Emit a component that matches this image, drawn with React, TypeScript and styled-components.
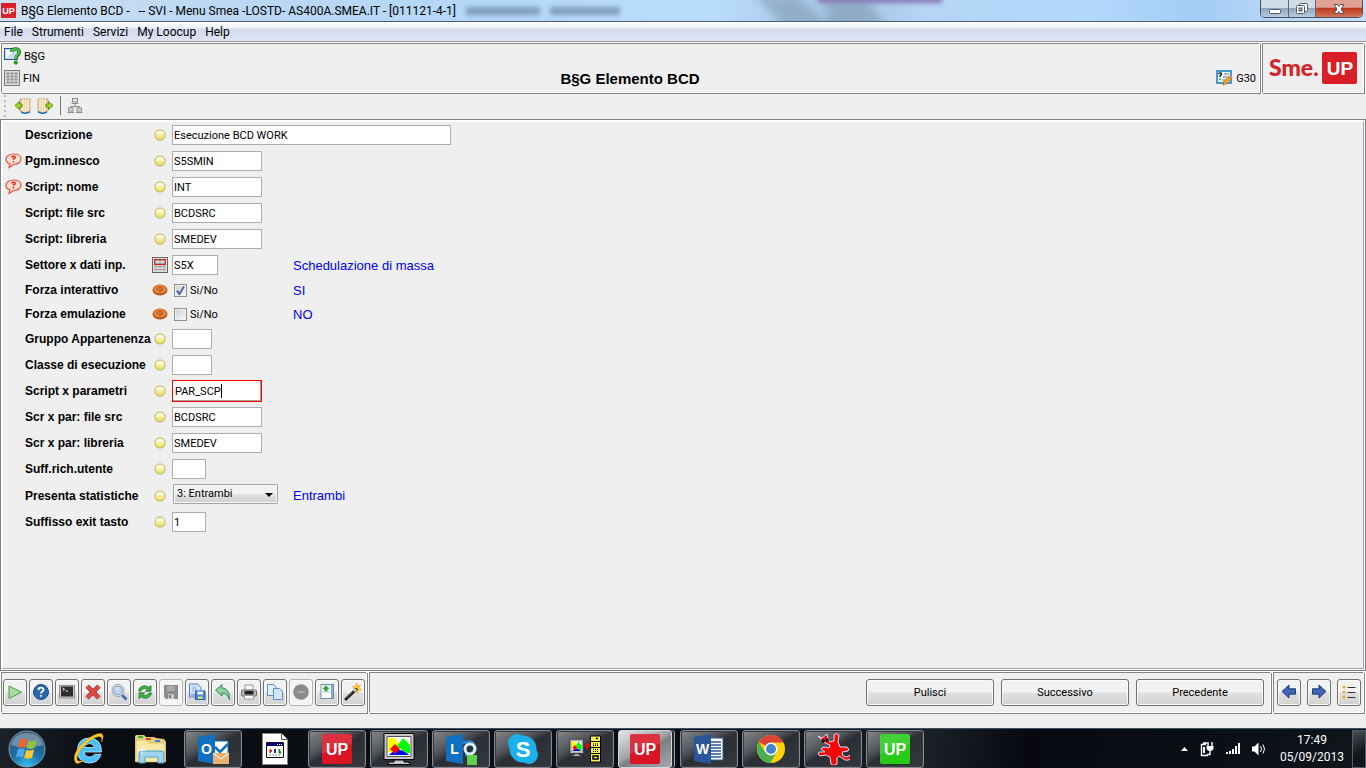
import React from "react";
import styled, { createGlobalStyle, css } from "styled-components";

const ui = `Roboto, "Open Sans", sans-serif`;
const arial = `"Liberation Sans", Arial, sans-serif`;
const face = "#efefef";
const line = "#848484";

const GlobalStyle = createGlobalStyle`
  * { box-sizing: border-box; }
  body { margin: 0; background: ${face}; font-family: ${ui}; font-size: 11px; color: #000; }
  button, input, select { font: inherit; color: inherit; margin: 0; }
`;

/* ---------- layout ---------- */

const Page = styled.div`
  display: flex;
  flex-direction: column;
  min-height: 100vh;
`;

const TitleBar = styled.header`
  position: relative;
  display: flex;
  align-items: flex-start;
  height: 22px;
  padding-left: 1px;
  overflow: hidden;
  border-bottom: 1px solid #4f5d6c;
  background: linear-gradient(90deg, #cfe0f2 0%, #bcd8f3 15%, #b4d7f8 35%, #badcfd 52%, #a3c3e0 62%, #b5d6f6 68%, #b2d8fb 80%, #a4cdf4 88%, #b8d8f5 94%, #c9def2 100%);
`;

const GlassShade = styled.svg`
  position: absolute;
  left: 0;
  top: 0;
  width: 100%;
  height: 21px;
`;

const WindowTitle = styled.h1`
  position: relative;
  flex: 1;
  margin: 0 0 0 5px;
  font-size: 12px;
  line-height: 22px;
  font-weight: 400;
  white-space: pre;
`;

const AppMark = styled.svg`
  position: relative;
  width: 15px;
  height: 15px;
  margin-top: 3px;
  flex: none;
`;

const WindowButtons = styled.div`
  position: relative;
  display: flex;
  height: 18px;
  margin-right: 3px;
  border: 1px solid #46525f;
  border-top: 0;
  border-radius: 0 0 5px 5px;
  overflow: hidden;
`;

const WindowButton = styled.button<{ $close?: boolean }>`
  width: ${(p) => (p.$close ? 47 : 27)}px;
  padding: 0;
  border: 0;
  border-left: 1px solid #5b6a7a;
  background: linear-gradient(#cfdbe7 0 45%, #93a7bc 50%, #b7cbde);
  &:first-child { border-left: 0; }
  ${(p) => p.$close && css`background: linear-gradient(#dfa293 0 42%, #bf3a1d 50%, #d4745a);`}
  svg { display: block; margin: 0 auto; }
`;

const MenuBar = styled.nav`
  display: flex;
  gap: 9px;
  height: 20px;
  padding-left: 4px;
  border-bottom: 1px solid #979797;
  background: linear-gradient(#fff 0, #eef1f8 6px, #d5dbed 7px, #dfe4f4 19px);
  font-size: 12px;
  line-height: 20px;
`;

const MenuItem = styled.a`
  color: #000;
  text-decoration: none;
`;

const Bar = styled.div`
  display: flex;
  gap: 2px;
  padding: 1px 2px 1px 1px;
  background: #fff;
`;

const Etched = styled.div<{ $grow?: boolean }>`
  flex: ${(p) => (p.$grow ? "1" : "none")};
  border: 1px solid;
  border-color: ${line} #fff #fff ${line};
  background: ${face};
  box-shadow: 1px 1px 0 ${line};
`;

const HeaderPanel = styled(Etched)`
  display: grid;
  grid-template-columns: 1fr auto 1fr;
  grid-auto-rows: 22px;
  align-items: center;
  padding: 1px 3px 3px 2px;
`;

const IconLabel = styled.div<{ $end?: boolean }>`
  display: flex;
  align-items: center;
  gap: 3px;
  grid-column: ${(p) => (p.$end ? 3 : 1)};
  justify-content: ${(p) => (p.$end ? "flex-end" : "flex-start")};
`;

const PageTitle = styled.h2`
  grid-column: 2;
  margin: 0;
  font: bold 15px ${arial};
`;

const LogoPanel = styled(Etched)`
  display: flex;
  align-items: center;
  justify-content: center;
  width: 102px;
`;

const ToolStrip = styled.div`
  display: flex;
  align-items: center;
  height: 25px;
  padding: 0 0 2px 4px;
`;

const Grip = styled.span`
  width: 2px;
  height: 22px;
  margin-right: 8px;
  background: repeating-linear-gradient(#b9b9b9 0 2px, transparent 2px 5px);
`;

const StripButton = styled.button`
  display: flex;
  width: 23px;
  padding: 0;
  border: 0;
  background: none;
`;

const Divider = styled.span`
  width: 1px;
  height: 19px;
  margin-right: 6px;
  background: #777;
`;

const Workspace = styled.main`
  flex: 1;
  display: flex;
  border: 1px solid #7f7f8c;
  padding: 1px;
  background: #fff;
`;

const FormPanel = styled.form`
  flex: 1;
  padding-left: 2px;
  border: 1px solid;
  border-color: #fff #a6a6a6 #a6a6a6 #fff;
  background: ${face};
`;

const Row = styled.div<{ $h?: number }>`
  display: grid;
  grid-template-columns: 20px 127px 20px 121px 1fr;
  align-items: center;
  height: ${(p) => p.$h ?? 26}px;
  svg { display: block; }
`;

const FieldLabel = styled.label`
  grid-column: 2;
  font: bold 12px ${arial};
  white-space: nowrap;
`;

const MarkerCell = styled.span`
  grid-column: 3;
  display: flex;
  justify-content: center;
  width: 16px;
`;

const FieldCell = styled.div`
  position: relative;
  grid-column: 4;
  display: flex;
  align-items: center;
`;

const TextField = styled.input<{ $w: number; $active?: boolean }>`
  flex: none;
  width: ${(p) => p.$w}px;
  height: 20px;
  padding: 0 1px;
  border: 1px solid #abadb3;
  border-radius: 0;
  outline: 0;
  background: #fff;
  ${(p) => p.$active && css`
    height: 22px;
    padding: 0 2px;
    border-color: #f00;
    box-shadow: inset -1px -1px 0 #a0a0a0;
  `}
`;

const Caret = styled.span`
  position: absolute;
  left: 49px;
  width: 1px;
  height: 14px;
  background: #000;
`;

const CheckLabel = styled.label`
  display: flex;
  align-items: center;
  gap: 3px;
  padding-left: 2px;
`;

const CheckBox = styled.input`
  appearance: none;
  width: 13px;
  height: 13px;
  border: 1px solid #8e8f8f;
  background: linear-gradient(135deg, #cfd3d8, #f6f6f6) content-box #f4f4f4;
  padding: 1px;
  &:checked {
    background: url("data:image/svg+xml,%3Csvg xmlns='http://www.w3.org/2000/svg' viewBox='0 0 11 11'%3E%3Cpath d='M2.5 5.5 4.6 8.500 8.500 2' fill='none' stroke='%234a5fa1' stroke-width='1.6'/%3E%3C/svg%3E") border-box, linear-gradient(135deg, #cfd3d8, #f6f6f6) content-box #f4f4f4;
  }
`;

const SelectBox = styled.div`
  position: relative;
  width: 105px;
  height: 20px;
  margin: 0 0 4px 1px;
  svg { position: absolute; right: 5px; top: 9px; pointer-events: none; }
`;

const Select = styled.select`
  appearance: none;
  width: 100%;
  height: 20px;
  padding: 0 3px;
  border: 1px solid #a2a4a8;
  border-radius: 1px;
  box-shadow: inset 0 0 0 1px #f8f8f8;
  background: linear-gradient(#f2f2f2 0 48%, #e2e2e2 52%, #cfcfcf);
`;

const Decoded = styled.output`
  grid-column: 5;
  font: 13px ${arial};
  color: #0000f0;
`;

const ButtonPanel = styled(Etched)<{ $gap: number; $end?: boolean }>`
  display: flex;
  align-items: center;
  justify-content: ${(p) => (p.$end ? "flex-end" : "flex-start")};
  gap: ${(p) => p.$gap}px;
  height: 41px;
  padding: 0 ${(p) => (p.$end ? 6 : 1)}px 1px;
`;

const NavPanel = styled(ButtonPanel)`
  padding: 0 2px 1px 3px;
`;

const PushButton = styled.button<{ $wide?: boolean }>`
  display: flex;
  align-items: center;
  justify-content: center;
  flex: none;
  width: ${(p) => (p.$wide ? 128 : 24)}px;
  height: 27px;
  padding: 0;
  border: 1px solid #707070;
  border-radius: 3px;
  box-shadow: inset 0 0 0 1px #fafafa;
  background: linear-gradient(#f2f2f2 0 48%, #e0e0e0 52%, #d2d2d2);
  &:disabled {
    border-color: #b0b5b8;
    background: #f4f4f4;
  }
`;

const StatusStrip = styled.div`
  height: 14px;
`;

const TaskBar = styled.footer`
  display: flex;
  align-items: center;
  gap: 4px;
  height: 40px;
  border-top: 1px solid #3c5063;
  background: linear-gradient(100deg, #1b2229 0%, #090c11 8%, #0c1016 30%, #0a0d13 50%, #1a2027 68%, #07090f 75%, #0a0f18 90%, #10161c 100%);
  color: #fff;
`;

const TaskButton = styled.button<{ $look?: "open" | "active"; $start?: boolean }>`
  display: flex;
  align-items: center;
  justify-content: center;
  flex: none;
  width: ${(p) => (p.$start ? 56 : 58)}px;
  height: 38px;
  padding: ${(p) => (p.$start ? "0 2px 0 0" : "0")};
  border: 0;
  background: none;
  ${(p) => p.$look && css`
    border: 1px solid #85898d;
    border-radius: 3px;
    box-shadow: inset 0 0 0 1px #3a3e42;
    background: linear-gradient(150deg, #85888a 0%, #53575b 35%, #2b2f33 50%, #35393d 100%);
  `}
  ${(p) => p.$look === "active" && css`
    border-color: #d5d8da;
    box-shadow: 2px 0 0 #23282d, 3px 0 0 #9fa5aa;
    width: 54px;
    margin-right: 4px;
    background: linear-gradient(150deg, #e4e6e7 0%, #a3a6a9 45%, #7c8083 55%, #a6a9ab 100%);
  `}
`;

const Tray = styled.div`
  display: flex;
  align-items: center;
  gap: 12px;
  margin-left: auto;
  height: 100%;
`;

const Clock = styled.time`
  width: 68px;
  font-size: 12px;
  line-height: 17px;
  text-align: center;
`;

const ShowDesktop = styled.button`
  width: 14px;
  height: 38px;
  margin-left: -6px;
  padding: 0;
  border: 1px solid #555c63;
  background: linear-gradient(150deg, #4a5057, #12161a 60%);
`;

/* ---------- icons ---------- */

const UpBadge = ({ fill }: { fill: string }) => (
  <svg width="30" height="30" viewBox="0 0 30 30">
    <rect width="30" height="30" rx="2" fill={fill} />
    <path d="M0 2q0-2 2-2h26q2 0 2 2v8Q14 12 0 20z" fill="#fff" opacity=".12" />
    <text x="15" y="21" textAnchor="middle" fontFamily="Liberation Sans" fontWeight="700" fontSize="16" fill="#fff">UP</text>
  </svg>
);

const YellowDot = () => (
  <svg width="12" height="12" viewBox="0 0 12 12">
    <defs>
      <linearGradient id="dot" x1="0" y1="0" x2="0" y2="1">
        <stop offset="0" stopColor="#fffde0" /><stop offset=".5" stopColor="#f7f09a" /><stop offset="1" stopColor="#e6d95c" />
      </linearGradient>
    </defs>
    <rect x="1" y="1" width="10" height="10" rx="4.500" fill="url(#dot)" stroke="#b9b25c" />
    <path d="M3 3.500q3-1.500 6 0v2H3z" fill="#fff" opacity=".6" />
  </svg>
);

const RedTable = () => (
  <svg width="16" height="16" viewBox="0 0 16 16">
    <rect x=".5" y=".5" width="15" height="15" fill="#dedede" stroke="#666" />
    <path d="M2.500 3.500h3M6.500 3.500h3M10.500 3.500h3M2.500 6.500h3M6.500 6.500h3M10.500 6.500h3M2.500 9.500h3M6.500 9.500h3M10.500 9.500h3M2.500 12.500h3M6.500 12.500h3M10.500 12.500h3" stroke="#8f8f8f" strokeWidth="1.700" />
    <rect x="2.500" y="2.500" width="11" height="5" fill="none" stroke="#d3221f" />
  </svg>
);

const GreyTable = () => (
  <svg width="16" height="16" viewBox="0 0 16 16">
    <rect x=".5" y=".5" width="15" height="15" fill="#dedede" stroke="#777" />
    <path d="M2.500 3.500h3M6.500 3.500h3M10.500 3.500h3M2.500 6.500h3M6.500 6.500h3M10.500 6.500h3M2.500 9.500h3M6.500 9.500h3M10.500 9.500h3M2.500 12.500h3M6.500 12.500h3M10.500 12.500h3" stroke="#8f8f8f" strokeWidth="2" />
  </svg>
);

const Coin = () => (
  <svg width="16" height="12" viewBox="0 0 16 12">
    <ellipse cx="8" cy="6.800" rx="7.300" ry="4.700" fill="#a8480f" />
    <ellipse cx="8" cy="5.500" rx="7" ry="4.500" fill="#e08238" stroke="#b85a1a" strokeWidth=".8" />
    <path d="M5 6q0-2.500 3-2.500 3 .3 2.700 2-1 1.700-4 1.500M7.500 5.500h2" fill="none" stroke="#a34c12" strokeWidth=".8" />
  </svg>
);

const HelpBalloon = () => (
  <svg width="17" height="16" viewBox="0 0 17 16">
    <path d="M8.500 1C13 1 16 2.600 16 5.800s-3 5.400-7 5.700L4 14.500l1-3.500C2.500 10.200 1 8.500 1 6.200 1 3 4.200 1 8.500 1z" fill="#ffe2cf" stroke="#ee4a42" strokeWidth="1.200" />
    <path d="M6.500 4.300q.6-1 2-1 1.800.1 1.700 1.300-.1.900-1.800 1.300v.9M8.500 8v1.400" fill="none" stroke="#e2211d" strokeWidth="1.400" />
  </svg>
);

const QuestionWindow = () => (
  <svg width="17" height="18" viewBox="0 0 17 18">
    <rect x=".5" y="1.500" width="13" height="11" fill="#c9def4" stroke="#27548d" />
    <path d="M2 3h10L2 11z" fill="#f4faff" />
    <path d="M7.500 5Q8 2 11.500 2t3.800 3q.1 2.200-2.300 3.800-1 .7-1 2.700" fill="none" stroke="#1d731b" strokeWidth="3.400" />
    <path d="M7.500 5Q8 2.200 11.500 2.200t3.600 3q0 1.900-2.300 3.400-1 .8-1 2.600" fill="none" stroke="#4cd047" strokeWidth="1.800" />
    <circle cx="11.800" cy="15.500" r="1.600" fill="#2fae2c" stroke="#1d731b" />
  </svg>
);

const FormPencil = () => (
  <svg width="17" height="16" viewBox="0 0 17 16">
    <rect x="1" y="1" width="14" height="12" fill="#eef7fd" stroke="#1b87bd" strokeWidth="1.600" />
    <path d="M2.500 4q.5-1.300 1.700-1.200 1.500.2 1.300 1.500L4 6v1M4 8.500v1.300" stroke="#111" strokeWidth="1.300" fill="none" />
    <path d="M8 4h5M7 7h4M6 10h3" stroke="#6a7c88" />
    <path d="M7 15l1-3.500L13 6l2.700 2.400-5.200 5.400z" fill="#f5a524" stroke="#9a5c10" strokeWidth=".7" />
    <path d="M13 6l1.200-1 2.500 2.200-1 1.200z" fill="#d98ab5" />
  </svg>
);

const Door = ({ out }: { out?: boolean }) => (
  <svg width="17" height="16" viewBox="0 0 17 16">
    <g transform={out ? "" : "translate(17 0) scale(-1 1)"}>
      <path d="M1 1h10v12l-5 2-5-1.500z" fill="#edd2a8" stroke="#c29c66" strokeWidth=".8" />
      <path d="M3 1v12M5.500 1v13M8 1v13" stroke="#fdf3df" strokeWidth="1.200" />
      <path d="M1 14l5 1.500 4-1.500" stroke="#1f6fb8" strokeWidth="1.400" fill="none" />
      <path d="M9 6h2.500V3.500L16 7.500l-4.500 4V9H9z" fill="#a6d51e" stroke="#5c8c10" />
    </g>
  </svg>
);

const Hierarchy = () => (
  <svg width="16" height="16" viewBox="0 0 16 16" fill="#e6e6e6" stroke="#8b8b8b">
    <path d="M8 5v4M3.500 10V8.500h9V10" fill="none" />
    <rect x="5.500" y=".5" width="5" height="3.500" /><path d="M4.500 5.500h7" />
    <rect x="1.500" y="10" width="4.500" height="3" /><rect x="10" y="10" width="4.500" height="3" />
    <path d="M.5 14.500h6.500M9 14.500h6.500" />
  </svg>
);

const Ico = ({ children }: { children: React.ReactNode }) => (
  <svg width="18" height="18" viewBox="0 0 18 18">{children}</svg>
);

const PlayIcon = () => <Ico><path d="M3 3v12.500L15.500 9.200z" fill="#a8dba4" stroke="#4d9b4b" /></Ico>;
const AboutIcon = () => (
  <Ico>
    <circle cx="9" cy="9" r="7.500" fill="#2a69b0" stroke="#194a85" />
    <path d="M6.500 7Q6.500 4.700 9 4.700t2.500 2.100q0 1.200-1.600 2.100-.9.500-.9 1.600M9 11.900v1.900" fill="none" stroke="#fff" strokeWidth="1.800" />
  </Ico>
);
const ConsoleIcon = () => (
  <Ico>
    <rect x="1.500" y="2.500" width="15" height="12.500" fill="#c9c9c9" stroke="#8f8f8f" />
    <rect x="3" y="3.500" width="12" height="10" fill="#2d2d2d" />
    <path d="M4.500 5l2 1.300-2 1.300M7.500 8h2.500" stroke="#fff" fill="none" strokeWidth=".9" />
  </Ico>
);
const DeleteIcon = () => (
  <Ico><path d="M4.600 2L9 6.200 13.400 2 16 4.700 11.800 9l4.200 4.300-2.600 2.700L9 11.800 4.600 16 2 13.300 6.200 9 2 4.700z" fill="#dc4a47" stroke="#b83432" /></Ico>
);
const SearchIcon = () => (
  <Ico>
    <path d="M11.500 11.500l5 5" stroke="#3f68b0" strokeWidth="2.600" />
    <circle cx="8" cy="7.500" r="6" fill="#e9eaec" stroke="#9a9a9a" />
    <circle cx="8" cy="7.500" r="4.200" fill="#bcd6f3" stroke="#7a9cc8" />
    <path d="M5.500 6.500q1-2 3-2" stroke="#fff" fill="none" />
  </Ico>
);
const RefreshIcon = () => (
  <Ico>
    <path d="M2.500 8q1-5 6-5.200 2.500 0 4.300 1.500L15 2.500V8.200H9.300l2-2Q10 5.300 8.300 5.400 6 5.600 5.200 8z" fill="#42b049" stroke="#187a20" strokeWidth=".8" />
    <path d="M15.500 10q-1 5-6 5.200-2.500 0-4.300-1.500L3 15.500V9.800h5.700l-2 2q1.300.9 3 .8 2.300-.2 3.100-2.600z" fill="#42b049" stroke="#187a20" strokeWidth=".8" />
  </Ico>
);
const SaveIcon = () => (
  <Ico><path d="M2 2h14v14H4l-2-2z" fill="#8c8c8c" /><path d="M5 3h8v5H5z" fill="#a9a9a9" /><path d="M6 11h6v5H6z" fill="#c9c9c9" /><path d="M7 12h2v3H7z" fill="#777" /></Ico>
);
const SaveAsIcon = () => (
  <Ico>
    <path d="M1.500 1h8l3.500 3.500V14H1.500z" fill="#dbe9fa" stroke="#4b7fc6" />
    <path d="M3.500 4h5M3.500 6h6M3.500 8h3M3 11h5v2H3z" stroke="#8db2e3" fill="#8db2e3" />
    <rect x="7.500" y="8" width="9.500" height="8.500" fill="#5187cf" stroke="#2a5da8" />
    <path d="M9.500 8.500h5.500v3H9.500z" fill="#fff" /><path d="M10 13.500h4.500V16H10z" fill="#bfe08a" />
  </Ico>
);
const UndoIcon = () => (
  <Ico><path d="M1.500 7.200L8 1.500v3.300q7.500.5 7.500 11.700Q13 10 8 10v3z" fill="#8fd0a3" stroke="#2c8a4c" /></Ico>
);
const PrintIcon = () => (
  <Ico>
    <path d="M5 2h8v5H5z" fill="#fdfdfd" stroke="#999" />
    <rect x="1.500" y="7" width="15" height="6" rx="1" fill="#b8b8b8" stroke="#707070" />
    <path d="M4.500 8h9v3.500h-9z" fill="#222" />
    <path d="M4.500 12.500h9V16h-9z" fill="#fff" stroke="#999" />
  </Ico>
);
const CopyIcon = () => (
  <Ico>
    <path d="M1.500 1.500h6L10 4v8.500H1.500z" fill="#e3eefb" stroke="#5b8dd0" />
    <path d="M7.500 5.500h6L16.500 8v8.500h-9z" fill="#d5e5f8" stroke="#5b8dd0" />
  </Ico>
);
const StopIcon = () => <Ico><circle cx="9" cy="9" r="7.800" fill="#8b8b8b" /><path d="M5.500 9h7" stroke="#aaa" strokeWidth="2" /></Ico>;
const ExportIcon = () => (
  <Ico>
    <rect x="3" y="1.500" width="12.500" height="14" fill="#fff" stroke="#6c8eb4" />
    <path d="M3.500 2h9v6h-9z" fill="#e6f4e4" /><path d="M13 2h2v13h-2z" fill="#84a9d8" />
    <path d="M8 2.500L4.500 6h2v2.500h3V6h2z" fill="#2f9e3a" />
    <path d="M4 9h8.500" stroke="#b9cbe0" />
  </Ico>
);
const WandIcon = () => (
  <Ico>
    <path d="M12.500 0l1 3 3-.8-1.600 2.700L17.500 7l-3.200.3L14 10.500l-2-2.500-3 1 1.500-3L8.500 3.500l3 .2z" fill="#ffc83a" stroke="#e29b12" strokeWidth=".6" />
    <path d="M2 16L12 6.500" stroke="#1a1a1a" strokeWidth="3" strokeLinecap="round" /><path d="M10 8.200L12 6.300" stroke="#eee" strokeWidth="2.400" />
    <path d="M2.500 15L9 8.500" stroke="#8b8b8b" strokeWidth=".8" />
  </Ico>
);
const ArrowIcon = ({ right }: { right?: boolean }) => (
  <Ico><path transform={right ? "translate(18 0) scale(-1 1)" : ""} d="M2 8.500L9 2v3.800h6.500v5.400H9V15z" fill="#3f68ae" stroke="#1d3d7c" /></Ico>
);
const ListIcon = () => (
  <Ico>
    <circle cx="4" cy="4" r="1.500" fill="#f0a33c" /><circle cx="4" cy="9" r="1.500" fill="#f0a33c" /><circle cx="4" cy="14" r="1.500" fill="#f0a33c" />
    <path d="M7.500 4.500h8M7.500 9.500h8M7.500 14.500h8" stroke="#333" />
  </Ico>
);

const StartOrb = () => (
  <svg width="40" height="38" viewBox="0 0 40 38">
    <defs>
      <radialGradient id="orb" cx=".5" cy="1" r="1"><stop offset="0" stopColor="#36c5f5" /><stop offset=".45" stopColor="#1b6ea8" /><stop offset="1" stopColor="#39566e" /></radialGradient>
    </defs>
    <circle cx="20" cy="19" r="18" fill="url(#orb)" stroke="#7f9db5" />
    <path d="M4 15Q7 3 20 3t16 12Q20 20 4 15z" fill="#fff" opacity=".3" />
    <path d="M13 10q4-2.500 7.500-.3L18.500 18q-4-2-7.500.2z" fill="#f0652b" />
    <path d="M21.700 10.200q4 2 8-.2L27.500 18q-4 2-7.800.3z" fill="#8cc43d" />
    <path d="M10.700 19.500q3.500-2.200 7.400-.3L16 27.400q-3.500-2-7.300.2z" fill="#4aa8e8" />
    <path d="M19.300 19.700q4 1.800 7.900-.2L25 27.700q-4 2-7.800 0z" fill="#fdc82f" />
  </svg>
);

const IeIcon = () => (
  <svg width="32" height="34" viewBox="0 0 32 34">
    <path d="M28.500 20H11.200q.7 5 5.500 5 3.500 0 4.700-2.700h6.700Q25.500 31 16.500 31 4.500 30.500 4.300 18.500 4.700 6.200 16.500 6q12 .5 12 14zM21.500 15.500q-.8-4-5-4-4.400.2-5.200 4z" fill="#4cc0f8" stroke="#c4ebff" strokeWidth=".8" />
    <path d="M3 31Q-2 24 8 13 20 1 28 1.500 32 3 28.500 10 30 4 25.500 4.500 18 6 9 16 1.500 26 5 29 7.500 30 11 28 5.500 32.500 3 31z" fill="#fccb2e" stroke="#d99a10" strokeWidth=".5" />
  </svg>
);

const ExplorerIcon = () => (
  <svg width="34" height="32" viewBox="0 0 34 32">
    <path d="M1 4q0-2 2-2h7l2 2h8l2 1 8 1 2 3v20H1z" fill="#e9ce7a" />
    <path d="M4 3h5v2H4z" fill="#2fae3a" /><path d="M12 5h5v2h-5z" fill="#d8412f" /><path d="M21 7h5v2h-5z" fill="#3b86d8" />
    <path d="M2 7h10l3 3h16v19H2z" fill="#f8e8a8" stroke="#cfae55" strokeWidth=".6" />
    <path d="M5 30V21q0-3 3-3h19q3 0 3 3v9h-6v-6H11v6z" fill="#9ed4ee" stroke="#4f9fc8" />
    <path d="M8 13v8M4 17h8" stroke="#fff" />
  </svg>
);

const OfficeMark = ({ letter, fill }: { letter: string; fill: string }) => (
  <g>
    <path d="M1 4L18 1v30L1 28z" fill={fill} />
    <text x="9.500" y="21" textAnchor="middle" fontFamily="Liberation Sans" fontWeight="700" fontSize="14" fill="#fff">{letter}</text>
  </g>
);
const OutlookIcon = () => (
  <svg width="32" height="32" viewBox="0 0 32 32">
    <path d="M17 8h14v14H17z" fill="#fff" stroke="#0f6fc0" /><path d="M18 14l5 5 8-8" stroke="#0f6fc0" strokeWidth="2.500" fill="none" />
    <OfficeMark letter="O" fill="#0f6fc0" />
    <path d="M16 20h16v11H16z" fill="#e9b274" /><path d="M16 20l8 6 8-6" stroke="#fff" fill="none" />
  </svg>
);
const LyncIcon = () => (
  <svg width="32" height="32" viewBox="0 0 32 32">
    <path d="M18 10q10-4 12 4-1 8-10 8" fill="none" stroke="#2a86d0" strokeWidth="3" />
    <circle cx="25" cy="16" r="5" fill="none" stroke="#dcecf8" strokeWidth="3" />
    <OfficeMark letter="L" fill="#0f6fc0" />
    <path d="M22 22h10v10H22z" fill="#5fd04c" />
  </svg>
);
const WordIcon = () => (
  <svg width="32" height="32" viewBox="0 0 32 32">
    <path d="M16 5h14v22H16z" fill="#fff" stroke="#2a5699" /><path d="M18 9h10M18 12h10M18 15h10M18 18h10M18 21h10M18 24h10" stroke="#2a5699" strokeWidth="1.300" />
    <OfficeMark letter="W" fill="#2a5699" />
  </svg>
);
const DocIcon = () => (
  <svg width="26" height="32" viewBox="0 0 26 32">
    <path d="M.5.500h19l6 6v25H.5z" fill="#fff" stroke="#888" /><path d="M19.500.500v6h6" fill="#fff" stroke="#555" />
    <path d="M4.500 9.500h17v15h-17z" fill="#fff" stroke="#111" /><path d="M5 10h16v3H5z" fill="#000080" />
    <path d="M15 11.500h1M17 11.500h1M19 11.500h1" stroke="#fff" />
    <path d="M8 16v4l2-2z" fill="#d21" stroke="#d21" /><path d="M12 16h2v4h-2z" fill="#22c" /><path d="M17 16v4h2z" fill="#181" stroke="#181" />
    <path d="M7 22h12" stroke="#888" strokeDasharray="2 1" />
  </svg>
);
const Monitor = () => (
  <g>
    <path d="M2 .5h30v26H2z" fill="#c6c6c6" stroke="#000" /><path d="M5 3.500h24v20H5z" fill="#fff" stroke="#555" />
    <path d="M6 5h7l4 6-4 8H6z" fill="#ff0" /><path d="M7 22q10-10 20 0z" fill="#00f" />
    <path d="M15 13l6-8 7 7v8h-4z" fill="#0f0" /><path d="M8 16l5-5 5 5-5 5z" fill="#f00" />
    <path d="M12 27h10v2h4l3 2.500H5L8 29h4z" fill="#c6c6c6" stroke="#000" />
  </g>
);
const MonitorIcon = () => <svg width="34" height="32" viewBox="0 0 34 32"><Monitor /></svg>;
const ServerIcon = () => (
  <svg width="32" height="28" viewBox="0 0 32 28">
    <g transform="translate(0 4) scale(.45 .55)"><Monitor /></g>
    <path d="M16 11l2-2v4l3-4" stroke="#f00" fill="none" strokeWidth="1.300" />
    <path d="M21.500 1h10v26h-10z" fill="#f5ef5a" stroke="#000" />
    <path d="M22 6.500h9M22 12.500h9M22 18.500h9" stroke="#000" />
    <path d="M27 3.500h2M24 21h5v3h-5z" stroke="#000" strokeWidth="1.500" fill="none" /><path d="M24 9h5M24 10.500h5M24 14.500h5M24 16.500h5" stroke="#000" strokeDasharray="1 1" />
  </svg>
);
const SkypeIcon = () => (
  <svg width="32" height="32" viewBox="0 0 32 32">
    <circle cx="10" cy="10" r="9" fill="#1bb0ee" /><circle cx="22" cy="22" r="9" fill="#1bb0ee" /><circle cx="16" cy="16" r="13.500" fill="#1bb0ee" />
    <text x="16" y="24" textAnchor="middle" fontFamily="Liberation Sans" fontWeight="700" fontSize="22" fill="#fff">S</text>
  </svg>
);
const ChromeIcon = () => (
  <svg width="30" height="30" viewBox="0 0 30 30">
    <circle cx="15" cy="15" r="14" fill="#fdd008" />
    <path d="M15 15L2.900 8A14 14 0 0 1 27.500 8.500H15z" fill="#dd4134" />
    <path d="M2.900 8A14 14 0 0 0 14.500 29l6-11L9 18z" fill="#4caf50" />
    <circle cx="15" cy="15" r="6.500" fill="#fff" /><circle cx="15" cy="15" r="5" fill="#3f86cf" />
  </svg>
);
const CreatureIcon = () => (
  <svg width="34" height="32" viewBox="0 0 34 32">
    <path d="M2 3l4 2 5-4 1 5 2 3 4-1V2q3-3 5 0l-1 7 2 5h7q3 2 1 4l-6 1 1 4 4 1q2-3 4 0-1 4-6 3l-6-4-2 2 0 6q-3 3-6 0l-1-7-4-2-6 1q-3-2-1-4h6l-4-3q0-2 4-2l4 1 1-3-5-2z" fill="#f00" stroke="#dfe0ff" />
    <circle cx="7" cy="8" r="1.800" fill="#111" /><circle cx="11" cy="7" r="1.800" fill="#111" />
  </svg>
);

const SmeUpLogo = () => (
  <svg width="90" height="34" viewBox="0 0 90 34" role="img" aria-label="Sme.UP">
    <text x="1" y="25" fontFamily="Lato" fontWeight="900" fontSize="23" fill="#d81e26">Sme.</text>
    <rect x="54" y="1" width="35" height="32" rx="2" fill="#d81e26" />
    <text x="72" y="24" textAnchor="middle" fontFamily="Liberation Sans" fontWeight="700" fontSize="19" fill="#fff">UP</text>
  </svg>
);

/* ---------- content ---------- */

type Field = {
  id: string;
  label: string;
  value?: string;
  width?: number;
  help?: boolean;
  active?: boolean;
  kind?: "text" | "check" | "select";
  icon?: "dot" | "table" | "coin";
  decoded?: string;
};

const fields: Field[] = [
  { id: "descrizione", label: "Descrizione", value: "Esecuzione BCD WORK", width: 279 },
  { id: "pgm", label: "Pgm.innesco", value: "S5SMIN", help: true },
  { id: "nome", label: "Script: nome", value: "INT", help: true },
  { id: "src", label: "Script: file src", value: "BCDSRC" },
  { id: "lib", label: "Script: libreria", value: "SMEDEV" },
  { id: "settore", label: "Settore x dati inp.", value: "S5X", width: 46, icon: "table", decoded: "Schedulazione di massa" },
  { id: "interattivo", label: "Forza interattivo", kind: "check", value: "1", icon: "coin", decoded: "SI" },
  { id: "emulazione", label: "Forza emulazione", kind: "check", icon: "coin", decoded: "NO" },
  { id: "gruppo", label: "Gruppo Appartenenza", width: 40 },
  { id: "classe", label: "Classe di esecuzione", width: 40 },
  { id: "parametri", label: "Script x parametri", value: "PAR_SCP", active: true },
  { id: "parsrc", label: "Scr x par: file src", value: "BCDSRC" },
  { id: "parlib", label: "Scr x par: libreria", value: "SMEDEV" },
  { id: "suffrich", label: "Suff.rich.utente", width: 34 },
  { id: "statistiche", label: "Presenta statistiche", kind: "select", value: "3: Entrambi", decoded: "Entrambi" },
  { id: "exit", label: "Suffisso exit tasto", value: "1", width: 34 },
];

const markers = { dot: <YellowDot />, table: <RedTable />, coin: <Coin /> };
const rowHeights = { text: 26, check: 24, select: 27 };

const FieldRow = ({ f }: { f: Field }) => {
  const kind = f.kind ?? "text";
  return (
    <Row $h={rowHeights[kind]}>
      {f.help && <HelpBalloon />}
      <FieldLabel htmlFor={f.id}>{f.label}</FieldLabel>
      <MarkerCell>{markers[f.icon ?? "dot"]}</MarkerCell>
      <FieldCell>
        {kind === "text" && (
          <>
            <TextField id={f.id} $w={f.width ?? 90} $active={f.active} defaultValue={f.value ?? ""} />
            {f.active && <Caret />}
          </>
        )}
        {kind === "check" && (
          <CheckLabel>
            <CheckBox id={f.id} type="checkbox" defaultChecked={!!f.value} />
            Si/No
          </CheckLabel>
        )}
        {kind === "select" && (
          <SelectBox>
            <Select id={f.id} defaultValue={f.value}>
              <option>{f.value}</option>
            </Select>
            <svg width="8" height="4" viewBox="0 0 8 4"><path d="M0 0h8L4 4z" /></svg>
          </SelectBox>
        )}
      </FieldCell>
      {f.decoded && <Decoded htmlFor={f.id}>{f.decoded}</Decoded>}
    </Row>
  );
};

const tools: { name: string; icon: React.ReactNode; off?: boolean }[] = [
  { name: "Esegui", icon: <PlayIcon /> },
  { name: "Aiuto", icon: <AboutIcon /> },
  { name: "Console", icon: <ConsoleIcon /> },
  { name: "Elimina", icon: <DeleteIcon /> },
  { name: "Cerca", icon: <SearchIcon /> },
  { name: "Aggiorna", icon: <RefreshIcon /> },
  { name: "Salva", icon: <SaveIcon />, off: true },
  { name: "Salva con nome", icon: <SaveAsIcon /> },
  { name: "Annulla", icon: <UndoIcon /> },
  { name: "Stampa", icon: <PrintIcon /> },
  { name: "Copia", icon: <CopyIcon /> },
  { name: "Interrompi", icon: <StopIcon />, off: true },
  { name: "Esporta", icon: <ExportIcon /> },
  { name: "Procedura", icon: <WandIcon /> },
];

const tasks: { name: string; icon: React.ReactNode; look?: "open" | "active" }[] = [
  { name: "Internet Explorer", icon: <IeIcon /> },
  { name: "Esplora risorse", icon: <ExplorerIcon /> },
  { name: "Outlook", icon: <OutlookIcon />, look: "open" },
  { name: "Documento", icon: <DocIcon /> },
  { name: "Sme.UP", icon: <UpBadge fill="#d81425" />, look: "open" },
  { name: "Emulatore", icon: <MonitorIcon />, look: "open" },
  { name: "Lync", icon: <LyncIcon />, look: "open" },
  { name: "Skype", icon: <SkypeIcon />, look: "open" },
  { name: "Connessione", icon: <ServerIcon />, look: "open" },
  { name: "Menu Smea", icon: <UpBadge fill="#d81425" />, look: "active" },
  { name: "Word", icon: <WordIcon />, look: "open" },
  { name: "Chrome", icon: <ChromeIcon />, look: "open" },
  { name: "Debug", icon: <CreatureIcon />, look: "open" },
  { name: "Sme.UP test", icon: <UpBadge fill="#26cc18" />, look: "open" },
];

export default function App() {
  return (
    <Page>
      <GlobalStyle />
      <TitleBar>
        <GlassShade viewBox="0 0 1366 21" preserveAspectRatio="none">
          <defs>
            <filter id="soft" x="-20%" y="-60%" width="140%" height="220%"><feGaussianBlur stdDeviation="4" /></filter>
            <filter id="haze" x="-20%" y="-60%" width="140%" height="220%"><feGaussianBlur stdDeviation="2.500" /></filter>
          </defs>
          <g filter="url(#haze)" fill="#49647f" opacity=".5">
            <rect x="466" y="7" width="74" height="8" /><rect x="550" y="7" width="70" height="8" />
          </g>
          <path d="M755-5h40l40 35h-50zM825 0h40l25 30h-60z" filter="url(#soft)" fill="#7f9cb6" opacity=".6" />
          <rect x="818" y="-6" width="124" height="9" filter="url(#haze)" fill="#8a78b4" />
        </GlassShade>
        <AppMark viewBox="0 0 30 30">
          <rect width="30" height="30" fill="#dc1f2b" />
          <text x="15" y="21" textAnchor="middle" fontFamily="Liberation Sans" fontWeight="700" fontSize="18" fill="#fff">UP</text>
        </AppMark>
        <WindowTitle>B§G Elemento BCD -   -- SVI - Menu Smea -LOSTD- AS400A.SMEA.IT - [011121-4-1]</WindowTitle>
        <WindowButtons>
          <WindowButton aria-label="Riduci a icona">
            <svg width="14" height="16" viewBox="0 0 14 16"><rect x="1.500" y="8.500" width="11" height="4" rx="1" fill="#fff" stroke="#4b5866" /></svg>
          </WindowButton>
          <WindowButton aria-label="Ripristina">
            <svg width="14" height="16" viewBox="0 0 14 16" fill="#fff" stroke="#4b5866">
              <rect x="4.500" y="2.500" width="8" height="8" rx="1" /><rect x="1.500" y="4.500" width="8" height="8" rx="1" /><rect x="4" y="7" width="3" height="3" fill="#9db0c4" />
            </svg>
          </WindowButton>
          <WindowButton $close aria-label="Chiudi">
            <svg width="14" height="16" viewBox="0 0 14 16">
              <path d="M2 3.500h3.500L7 5.500 8.500 3.500H12L9 8l3 4.500H8.500L7 10.500 5.500 12.500H2L5 8z" fill="#fff" stroke="#57494d" />
            </svg>
          </WindowButton>
        </WindowButtons>
      </TitleBar>

      <MenuBar>
        {["File", "Strumenti", "Servizi", "My Loocup", "Help"].map((m) => (
          <MenuItem key={m} href="#">{m}</MenuItem>
        ))}
      </MenuBar>

      <Bar>
        <HeaderPanel $grow>
          <IconLabel><QuestionWindow />B§G</IconLabel>
          <IconLabel><GreyTable />FIN</IconLabel>
          <PageTitle>B§G Elemento BCD</PageTitle>
          <IconLabel $end><FormPencil />G30</IconLabel>
        </HeaderPanel>
        <LogoPanel><SmeUpLogo /></LogoPanel>
      </Bar>

      <ToolStrip>
        <Grip />
        <StripButton aria-label="Indietro"><Door /></StripButton>
        <StripButton aria-label="Avanti"><Door out /></StripButton>
        <Divider />
        <StripButton aria-label="Struttura"><Hierarchy /></StripButton>
      </ToolStrip>

      <Workspace>
        <FormPanel>
          {fields.map((f) => <FieldRow key={f.id} f={f} />)}
        </FormPanel>
      </Workspace>

      <Bar>
        <ButtonPanel $gap={2}>
          {tools.map((t) => (
            <PushButton key={t.name} aria-label={t.name} disabled={t.off}>{t.icon}</PushButton>
          ))}
        </ButtonPanel>
        <ButtonPanel $grow $end $gap={7}>
          {["Pulisci", "Successivo", "Precedente"].map((b) => <PushButton key={b} $wide>{b}</PushButton>)}
        </ButtonPanel>
        <NavPanel $gap={6}>
          <PushButton aria-label="Pagina precedente"><ArrowIcon /></PushButton>
          <PushButton aria-label="Pagina successiva"><ArrowIcon right /></PushButton>
          <PushButton aria-label="Elenco"><ListIcon /></PushButton>
        </NavPanel>
      </Bar>
      <StatusStrip />

      <TaskBar>
        <TaskButton $start aria-label="Start"><StartOrb /></TaskButton>
        {tasks.map((t) => <TaskButton key={t.name} $look={t.look} aria-label={t.name}>{t.icon}</TaskButton>)}
        <Tray>
          <svg width="7" height="4" viewBox="0 0 7 4"><path d="M0 4h7L3.500 0z" fill="#fff" /></svg>
          <svg width="14" height="16" viewBox="0 0 14 16" fill="none" stroke="#fff" strokeWidth="1.400">
            <path d="M6 3.500H1.500v11H8M3 2h4" /><path d="M8 1v4M12 1v4" /><path d="M6.500 5h7v3q-1 2-3.500 2t-3.500-2z" fill="#fff" stroke="none" /><path d="M10 9v4.500H7" /><path d="M3 6h2v6H3z" fill="#fff" stroke="none" />
          </svg>
          <svg width="14" height="12" viewBox="0 0 14 12" fill="#fff"><path d="M0 9h2v2H0zM3 8h2v3H3zM6 6h2v5H6zM9 3h2v8H9zM12 0h2v11h-2z" /></svg>
          <svg width="14" height="14" viewBox="0 0 14 14"><path d="M0 4.500h2.500L6.500.500v13l-4-4H0z" fill="#fff" /><path d="M8.500 4q2 3 0 6M11 2.500q3 4.500 0 9" fill="none" stroke="#fff" /></svg>
          <Clock>17:49<br />05/09/2013</Clock>
          <ShowDesktop aria-label="Mostra desktop" />
        </Tray>
      </TaskBar>
    </Page>
  );
}
